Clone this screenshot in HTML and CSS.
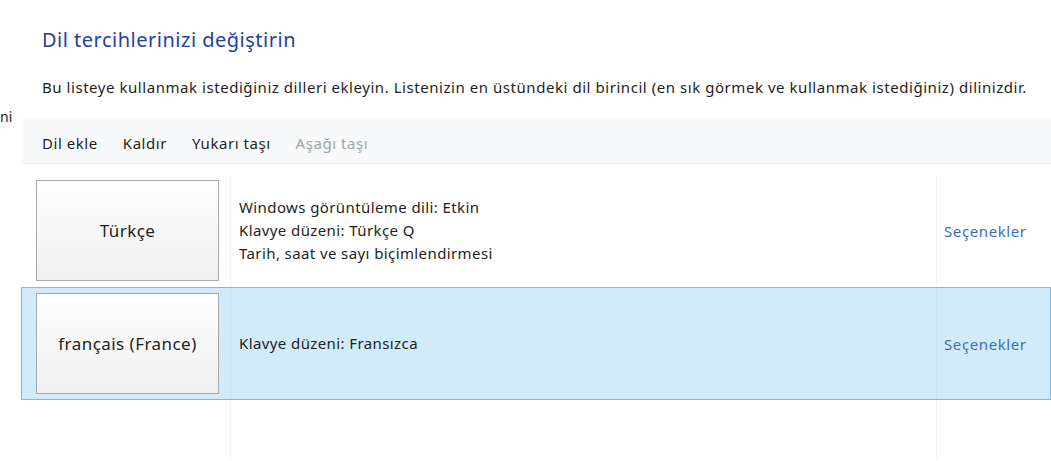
FILE: index.html
```html
<!DOCTYPE html>
<html lang="tr">
<head>
<meta charset="utf-8">
<title>Dil</title>
<link rel="stylesheet" href="styles.css">
</head>
<body>
<div class="page">
  <aside class="sidebar"><span class="peek">ni</span></aside>
  <main class="main">
    <h1 class="title">Dil tercihlerinizi değiştirin</h1>
    <p class="desc">Bu listeye kullanmak istediğiniz dilleri ekleyin. Listenizin en üstündeki dil birincil (en sık görmek ve kullanmak istediğiniz) dilinizdir.</p>
    <nav class="toolbar">
      <span class="tool">Dil ekle</span>
      <span class="tool">Kaldır</span>
      <span class="tool">Yukarı taşı</span>
      <span class="tool disabled">Aşağı taşı</span>
    </nav>
    <div class="list">
      <div class="row">
        <div class="cell c-name"><div class="langbox">Türkçe</div></div>
        <div class="cell c-info">
          <div>Windows görüntüleme dili: Etkin</div>
          <div>Klavye düzeni: Türkçe Q</div>
          <div>Tarih, saat ve sayı biçimlendirmesi</div>
        </div>
        <div class="cell c-opt"><span class="link">Seçenekler</span></div>
      </div>
      <div class="row selected">
        <div class="cell c-name"><div class="langbox">français (France)</div></div>
        <div class="cell c-info">
          <div>Klavye düzeni: Fransızca</div>
        </div>
        <div class="cell c-opt"><span class="link">Seçenekler</span></div>
      </div>
      <div class="row filler">
        <div class="cell c-name"></div>
        <div class="cell c-info"></div>
        <div class="cell c-opt"></div>
      </div>
    </div>
  </main>
</div>
</body>
</html>
```
FILE: styles.css
```css
html, body {
  margin: 0;
  padding: 0;
  height: 100%;
  background: #ffffff;
  overflow: hidden;
}
body {
  font-family: "Noto Sans", "Open Sans", sans-serif;
  color: #1e1e1e;
  font-size: 14px;
}
.page {
  display: flex;
  height: 100%;
}
.sidebar {
  width: 21px;
  flex: none;
  overflow: hidden;
  padding-top: 108px;
}
.peek {
  display: block;
  margin-left: 0;
  font-size: 14px;
  line-height: 18px;
  color: #1e1e1e;
}
.main {
  flex: 1;
  display: flex;
  flex-direction: column;
  min-width: 0;
}
.title {
  margin: 27px 0 0 21px;
  font-size: 20px;
  font-weight: normal;
  line-height: 26px;
  color: #2540a0;
  letter-spacing: 0.5px;
}
.desc {
  margin: 24px 0 0 21px;
  font-size: 15px;
  line-height: 20px;
  white-space: nowrap;
  color: #1e1e1e;
  letter-spacing: 0.55px;
}
.toolbar {
  margin: 21px 0 0 1px;
  height: 46px;
  display: flex;
  align-items: center;
  padding-left: 20px;
  background: #f8f9fb;
  border-bottom: 1px solid #ebedf0;
  box-sizing: border-box;
}
.tool {
  font-size: 15px;
  line-height: 20px;
  margin-right: 25px;
  color: #1e1e1e;
  letter-spacing: 0.55px;
  padding-top: 4px;
}
.tool.disabled {
  color: #a3a3a3;
}
.list {
  flex: 1;
  display: flex;
  flex-direction: column;
  padding-top: 10px;
}
.row {
  display: grid;
  grid-template-columns: 208px 706px 1fr;
  border: 1px solid transparent;
  height: 113px;
  box-sizing: border-box;
}
.row.selected {
  background: #d1ebfa;
  border-color: #79bde6;
}
.row.filler {
  flex: 1;
  height: auto;
}
.cell {
  display: flex;
  flex-direction: column;
  justify-content: center;
}
.c-name {
  padding: 5px 0 5px 14px;
}
.c-info {
  border-left: 1px solid #f1f3f5;
  padding-left: 8px;
  font-size: 15px;
  line-height: 23px;
  letter-spacing: 0.4px;
}
.selected .c-info,
.selected .c-opt {
  border-left-color: #c6e3f4;
}
.c-opt {
  border-left: 1px solid #f1f3f5;
  padding-left: 7px;
}
.langbox {
  width: 183px;
  height: 101px;
  box-sizing: border-box;
  border: 1px solid #a9a9a9;
  background: linear-gradient(#fefefe, #f0f0f0);
  display: flex;
  align-items: center;
  justify-content: center;
  font-size: 17px;
  color: #1e1e1e;
  letter-spacing: 0.45px;
}
.link {
  color: #3a6dc2;
  font-size: 15px;
  letter-spacing: 0.6px;
}
```
